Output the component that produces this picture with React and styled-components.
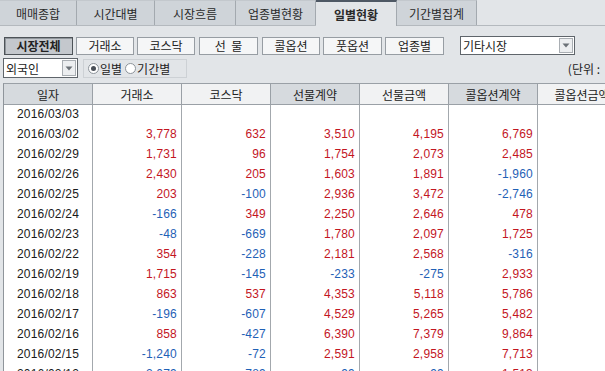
import React from "react";
import styled, { createGlobalStyle } from "styled-components";

const Global = createGlobalStyle`
  html, body { margin: 0; padding: 0; background: #e2e5e8; }
  body { font-family: "Noto Sans CJK KR", "Noto Sans", sans-serif; }
`;

const Frame = styled.div`
  width: 605px;
  height: 371px;
  overflow: hidden;
  background: #e2e5e8;
  color: #222;
  font-size: 12px;
`;

const TabBar = styled.div`
  display: flex;
  height: 26px;
  border-bottom: 1px solid #b4b9be;
  box-sizing: border-box;
`;

const Tab = styled.div`
  width: ${(p) => p.$w}px;
  box-sizing: border-box;
  display: flex;
  align-items: center;
  justify-content: center;
  font-size: 12px;
  color: #2a2a2a;
  background: ${(p) => (p.$active ? "#e2e5e8" : "#cfd4d9")};
  border-right: 1px solid #a3a9af;
  border-top: ${(p) => (p.$active ? "2px solid #4e5864" : "1px solid #c3c8cd")};
  font-weight: ${(p) => (p.$active ? 700 : 400)};
  margin-bottom: ${(p) => (p.$active ? "-1px" : "0")};
  height: ${(p) => (p.$active ? "26px" : "25px")};
`;

const Toolbar = styled.div`
  display: flex;
  align-items: center;
  padding: 10px 0 0 4px;
  height: 19px;
`;

const SegButton = styled.div`
  width: ${(p) => p.$w}px;
  height: 18px;
  box-sizing: border-box;
  margin-right: ${(p) => p.$gap}px;
  display: flex;
  align-items: center;
  justify-content: center;
  font-size: 12px;
  white-space: pre;
  color: #222;
  background: ${(p) => (p.$active ? "#c4c8cd" : "#f5f6f7")};
  border: 1px solid ${(p) => (p.$active ? "#4d5358" : "#979da3")};
  font-weight: ${(p) => (p.$active ? 700 : 400)};
  box-shadow: ${(p) => (p.$active ? "inset 1px 1px 0 #8f959b" : "none")};
`;

const Combo = styled.div`
  width: ${(p) => p.$w}px;
  height: ${(p) => p.$h}px;
  margin-left: ${(p) => p.$ml || 0}px;
  box-sizing: border-box;
  border: 1px solid #5f656b;
  background: #fff;
  display: flex;
  align-items: center;
  justify-content: space-between;
  padding-left: 2px;
  font-size: 12px;
`;

const ComboArrow = styled.div`
  width: 14px;
  height: calc(100% - 2px);
  margin-right: 1px;
  box-sizing: border-box;
  border: 1px solid #a9aeb3;
  background: #eceef0;
  display: flex;
  align-items: center;
  justify-content: center;
`;

const FilterRow = styled.div`
  display: flex;
  align-items: center;
  margin-top: 3px;
  padding-left: 3px;
  height: 20px;
`;

const RadioGroup = styled.div`
  margin-left: 5px;
  width: 104px;
  height: 19px;
  box-sizing: border-box;
  border: 1px solid #cdd1d5;
  display: flex;
  align-items: center;
  padding-left: 4px;
  gap: 3px;
`;

const RadioItem = styled.label`
  display: flex;
  align-items: center;
  gap: 1px;
  font-size: 12px;
`;

const RadioDot = styled.span`
  width: 11px;
  height: 11px;
  border-radius: 50%;
  box-sizing: border-box;
  border: 1px solid #8d949a;
  background: #fff;
  display: inline-flex;
  align-items: center;
  justify-content: center;
  &::after {
    content: "";
    width: 5px;
    height: 5px;
    border-radius: 50%;
    background: ${(p) => (p.$on ? "#4a5058" : "transparent")};
  }
`;

const Unit = styled.div`
  margin-left: auto;
  margin-right: 5px;
  font-size: 12px;
  white-space: nowrap;
`;

const Table = styled.div`
  margin: 5px 0 0 3px;
  border-left: 1px solid #8f959b;
  border-top: 1px solid #9aa0a6;
  background: #fff;
  width: 700px;
`;

const HeaderRow = styled.div`
  display: grid;
  grid-template-columns: repeat(7, 89px);
  height: 20px;
  border-bottom: 1px solid #9aa0a6;
`;

const HeadCell = styled.div`
  box-sizing: border-box;
  border-right: 1px solid #9aa0a6;
  background: ${(p) => (p.$dark ? "#d6dade" : "#f1f2f3")};
  display: flex;
  align-items: center;
  justify-content: center;
  font-size: 12px;
  color: #222;
  white-space: nowrap;
  overflow: hidden;
`;

const BodyRow = styled.div`
  display: grid;
  grid-template-columns: repeat(7, 89px);
  height: 20px;
`;

const Cell = styled.div`
  box-sizing: border-box;
  border-right: 1px solid #a3a8ad;
  display: flex;
  align-items: center;
  justify-content: ${(p) => (p.$center ? "center" : "flex-end")};
  padding-right: ${(p) => (p.$center ? 0 : 4)}px;
  padding-bottom: 2px;
  font-family: "Liberation Sans", Arial, sans-serif;
  font-size: 12px;
  letter-spacing: 0.2px;
  color: ${(p) => (p.$tone === "up" ? "#c3161f" : p.$tone === "down" ? "#1f61b6" : "#1a1a1a")};
`;

const tabs = [
  ["매매종합", 77],
  ["시간대별", 78],
  ["시장흐름", 81],
  ["업종별현황", 80],
  ["일별현황", 81, true],
  ["기간별집계", 80],
];

const buttons = [
  ["시장전체", 69, 3, true],
  ["거래소", 58, 3],
  ["코스닥", 58, 4],
  ["선  물", 59, 4],
  ["콜옵션", 58, 3],
  ["풋옵션", 59, 3],
  ["업종별", 59, 0],
];

const headers = [
  ["일자", true],
  ["거래소", false],
  ["코스닥", false],
  ["선물계약", true],
  ["선물금액", false],
  ["콜옵션계약", true],
  ["콜옵션금액", false],
];

const rows = [
  ["2016/03/03", "", "", "", "", "", ""],
  ["2016/03/02", "3,778", "632", "3,510", "4,195", "6,769", ""],
  ["2016/02/29", "1,731", "96", "1,754", "2,073", "2,485", ""],
  ["2016/02/26", "2,430", "205", "1,603", "1,891", "-1,960", ""],
  ["2016/02/25", "203", "-100", "2,936", "3,472", "-2,746", ""],
  ["2016/02/24", "-166", "349", "2,250", "2,646", "478", ""],
  ["2016/02/23", "-48", "-669", "1,780", "2,097", "1,725", ""],
  ["2016/02/22", "354", "-228", "2,181", "2,568", "-316", ""],
  ["2016/02/19", "1,715", "-145", "-233", "-275", "2,933", ""],
  ["2016/02/18", "863", "537", "4,353", "5,118", "5,786", ""],
  ["2016/02/17", "-196", "-607", "4,529", "5,265", "5,482", ""],
  ["2016/02/16", "858", "-427", "6,390", "7,379", "9,864", ""],
  ["2016/02/15", "-1,240", "-72", "2,591", "2,958", "7,713", ""],
  ["2016/02/12", "-2,079", "-789", "-99", "-99", "1,513", ""],
];

const tone = (v) => (v === "" ? "" : v.startsWith("-") ? "down" : "up");

const Arrow = () => (
  <svg width="8" height="5" viewBox="0 0 8 5">
    <path d="M0.5 0.5 L7.5 0.5 L4 4.5 Z" fill="#6b7177" />
  </svg>
);

export default function App() {
  return (
    <>
      <Global />
      <Frame>
        <TabBar>
          {tabs.map(([t, w, a]) => (
            <Tab key={t} $w={w} $active={a}>
              {t}
            </Tab>
          ))}
        </TabBar>
        <Toolbar>
          {buttons.map(([t, w, g, a]) => (
            <SegButton key={t} $w={w} $gap={g} $active={a}>
              {t}
            </SegButton>
          ))}
          <Combo $w={115} $h={19} $ml={16}>
            기타시장
            <ComboArrow>
              <Arrow />
            </ComboArrow>
          </Combo>
        </Toolbar>
        <FilterRow>
          <Combo $w={75} $h={20}>
            외국인
            <ComboArrow>
              <Arrow />
            </ComboArrow>
          </Combo>
          <RadioGroup>
            <RadioItem>
              <RadioDot $on />
              일별
            </RadioItem>
            <RadioItem>
              <RadioDot />
              기간별
            </RadioItem>
          </RadioGroup>
          <Unit>(단위 :</Unit>
        </FilterRow>
        <Table>
          <HeaderRow>
            {headers.map(([h, d]) => (
              <HeadCell key={h} $dark={d}>
                {h}
              </HeadCell>
            ))}
          </HeaderRow>
          {rows.map((r) => (
            <BodyRow key={r[0]}>
              {r.map((v, i) => (
                <Cell key={i} $center={i === 0} $tone={i === 0 ? "" : tone(v)}>
                  {v}
                </Cell>
              ))}
            </BodyRow>
          ))}
        </Table>
      </Frame>
    </>
  );
}
